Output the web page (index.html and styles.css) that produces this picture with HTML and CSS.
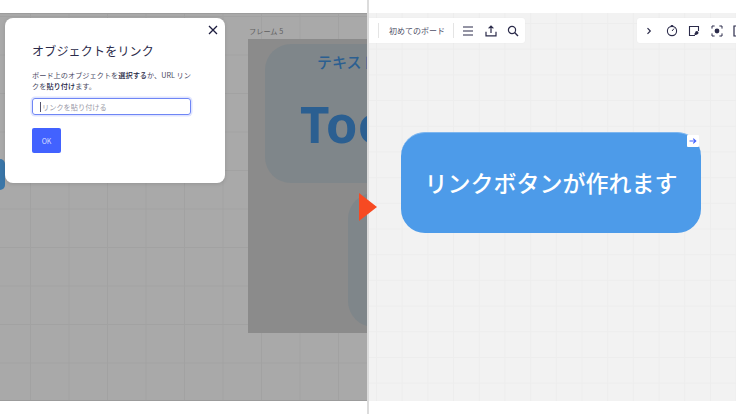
FILE: index.html
```html
<!DOCTYPE html>
<html lang="ja">
<head>
  <meta charset="UTF-8">
  <title>リンクボタン</title>
  <link rel="stylesheet" href="styles.css">
</head>
<body>
  <div class="split">
    <!-- Left: board dimmed behind the dialog -->
    <div class="pane">
      <div class="canvas canvas-dim">
        <div class="frame-label">フレーム 5</div>
        <div class="frame"></div>
        <div class="shape shape-top">
          <div class="shape-title">テキスト</div>
          <div class="shape-big">Too</div>
        </div>
        <div class="shape shape-bottom"></div>
        <div class="sliver"></div>
      </div>
      <div class="dialog">
        <svg class="dialog-close" width="12" height="12" viewBox="0 0 12 12"><path d="M2 2l8 8M10 2l-8 8" stroke="#1d1d3f" stroke-width="1.3" fill="none"/></svg>
        <h1 class="dialog-title">オブジェクトをリンク</h1>
        <p class="dialog-text">ボード上のオブジェクトを<b>選択する</b>か、URL リンクを<b>貼り付け</b>ます。</p>
        <div class="dialog-input"><span class="caret"></span>リンクを貼り付ける</div>
        <div class="dialog-ok">OK</div>
      </div>
    </div>

    <div class="divider"></div>

    <!-- Right: same board after the link is made -->
    <div class="pane">
      <div class="canvas canvas-light">
        <div class="toolbars">
          <div class="toolbar toolbar-left">
            <span class="tool-sep"></span>
            <span class="board-name">初めてのボード</span>
            <span class="tool-sep"></span>
            <svg class="tool" width="12" height="12" viewBox="0 0 12 12"><path d="M1 2h10M1 6h10M1 10h10" stroke="#2b2b4a" stroke-width="1.1" fill="none"/></svg>
            <svg class="tool" width="12" height="12" viewBox="0 0 12 12"><path d="M6 8V1.2M3.6 3.4L6 1l2.4 2.4M1 6.8v4h10v-4" stroke="#2b2b4a" stroke-width="1.2" fill="none"/></svg>
            <svg class="tool" width="12" height="12" viewBox="0 0 12 12"><circle cx="5" cy="5" r="3.6" stroke="#2b2b4a" stroke-width="1.2" fill="none"/><path d="M7.6 7.6L11 11" stroke="#2b2b4a" stroke-width="1.4"/></svg>
          </div>
          <div class="toolbar toolbar-right">
            <svg class="tool" width="12" height="12" viewBox="0 0 12 12"><path d="M4.5 3.2l2.8 2.8-2.8 2.8" stroke="#2b2b4a" stroke-width="1.2" fill="none"/></svg>
            <svg class="tool" width="12" height="12" viewBox="0 0 12 12"><circle cx="6" cy="6" r="4.6" stroke="#2b2b4a" stroke-width="1.1" fill="none"/><path d="M6 6l2-2.4M4.8.6h2.4" stroke="#2b2b4a" stroke-width="1" fill="none"/></svg>
            <svg class="tool" width="12" height="12" viewBox="0 0 12 12"><path d="M10.5 6V1.5h-9v9H7" stroke="#2b2b4a" stroke-width="1.1" fill="none"/><circle cx="8.8" cy="7.8" r="1.7" fill="#2b2b4a"/><rect x="6.6" y="8" width="2" height="2" fill="#2b2b4a"/></svg>
            <svg class="tool" width="12" height="12" viewBox="0 0 12 12"><path d="M1 3.6V1h2.6M8.4 1H11v2.6M11 8.4V11H8.4M3.6 11H1V8.4" stroke="#2b2b4a" stroke-width="1" fill="none"/><circle cx="6" cy="6" r="2.4" fill="#2b2b4a"/></svg>
            <svg class="tool" width="12" height="12" viewBox="0 0 12 12"><path d="M1 1h10v10H1z" stroke="#2b2b4a" stroke-width="1.2" fill="none"/></svg>
          </div>
        </div>
        <div class="link-button">
          リンクボタンが作れます
          <span class="link-badge">
            <svg width="8" height="8" viewBox="0 0 8 8"><path d="M.5 4h6M4.2 1.6L6.8 4 4.2 6.4" stroke="#4262ff" stroke-width="1.1" fill="none"/></svg>
          </span>
        </div>
      </div>
    </div>

    <div class="marker"></div>
  </div>
</body>
</html>
```

FILE: styles.css
```css
* {
  box-sizing: border-box;
}

body {
  margin: 0;
  background: #fff;
  font-family: "Noto Sans CJK JP", "Noto Sans", sans-serif;
  overflow: hidden;
}

.split {
  position: relative;
  display: flex;
  height: 414px;
}

.pane {
  position: relative;
  flex: 1;
  padding: 13px 0;
  overflow: hidden;
}

.divider {
  width: 2px;
  background: #dcdcdc;
}

.canvas {
  position: relative;
  height: 100%;
  overflow: hidden;
}

.canvas-dim {
  background-color: #a9a9a9;
  background-image:
    linear-gradient(#a2a2a2 1px, transparent 1px),
    linear-gradient(90deg, #a2a2a2 1px, transparent 1px);
  background-size: 38.5px 38.5px;
  background-position: 30px 2px;
  border-top: 1px solid #9c9c9c;
  border-bottom: 1px solid #9c9c9c;
}

.canvas-light {
  background-color: #f2f2f2;
  background-image:
    linear-gradient(#ededed 1px, transparent 1px),
    linear-gradient(90deg, #ededed 1px, transparent 1px);
  background-size: 25.7px 25.7px;
  background-position: 7px 10px;
}

/* dimmed board items */
.frame-label {
  position: absolute;
  left: 249px;
  top: 11px;
  font-size: 7.2px;
  line-height: 12px;
  color: #5f5f5f;
}

.frame {
  position: absolute;
  left: 248px;
  top: 25px;
  width: 130px;
  height: 294px;
  background: #8b8b8b;
}

.shape {
  position: absolute;
  background: #7f868a;
  border-radius: 26px;
}

.shape-top {
  left: 265px;
  top: 30px;
  width: 220px;
  height: 139px;
}

.shape-bottom {
  left: 348px;
  top: 179px;
  width: 120px;
  height: 134px;
}

.shape-title {
  padding: 6px 0 0 52px;
  font-size: 15px;
  line-height: 24px;
  font-weight: 500;
  color: #2b5f91;
}

.shape-big {
  padding: 16px 0 0 35px;
  font-family: "Noto Sans", sans-serif;
  font-size: 51px;
  line-height: 66px;
  font-weight: 700;
  color: #2b5f91;
}

.sliver {
  position: absolute;
  left: -10px;
  top: 145px;
  width: 15px;
  height: 31px;
  background: #3a76a8;
  border-radius: 5px;
}

/* dialog */
.dialog {
  position: absolute;
  left: 5px;
  top: 18px;
  width: 220px;
  height: 165px;
  padding: 25px 27px 0;
  background: #fff;
  border-radius: 8px;
  box-shadow: 0 1px 4px rgba(0, 0, 0, 0.12);
}

.dialog-close {
  position: absolute;
  right: 6px;
  top: 6px;
}

.dialog-title {
  margin: 0;
  font-size: 12px;
  line-height: 16px;
  font-weight: 400;
  letter-spacing: 0.2px;
  color: #2b2b4a;
}

.dialog-text {
  margin: 11px 0 0;
  font-size: 7.2px;
  line-height: 11px;
  color: #4a4a63;
}

.dialog-text b {
  font-weight: 500;
  color: #1d1d3f;
}

.dialog-input {
  display: flex;
  align-items: center;
  width: 159px;
  height: 17px;
  margin-top: 6px;
  padding-left: 7px;
  font-size: 7.2px;
  color: #9a9aa8;
  border: 1px solid #6f86f5;
  border-radius: 3px;
  box-shadow: 0 0 0 1.5px #dfe4ff;
}

.caret {
  width: 1px;
  height: 10px;
  margin-right: 1px;
  background: #55556e;
}

.dialog-ok {
  display: flex;
  align-items: center;
  justify-content: center;
  width: 29px;
  height: 25px;
  margin-top: 13px;
  font-size: 7px;
  color: #d5dcff;
  background: #4262ff;
  border-radius: 2px;
}

/* right board */
.toolbars {
  display: flex;
  justify-content: space-between;
  padding-top: 5px;
}

.toolbar {
  display: flex;
  align-items: center;
  height: 25px;
  background: #fff;
  box-shadow: 0 0 2px rgba(0, 0, 0, 0.04);
}

.toolbar-left {
  width: 156px;
  padding-left: 9px;
  border-radius: 0 3px 3px 0;
}

.toolbar-right {
  width: 99px;
  padding-left: 6px;
  border-radius: 3px 0 0 3px;
}

.tool-sep {
  width: 1px;
  height: 15px;
  background: #e4e4e4;
}

.board-name {
  width: 64px;
  margin-left: 10px;
  font-size: 8px;
  line-height: 12px;
  white-space: nowrap;
  color: #4f4f68;
}

.toolbar-left .tool {
  flex: none;
  margin-left: 10.5px;
}

.toolbar-left .tool-sep + .tool {
  margin-left: 8px;
}

.toolbar-right .tool {
  flex: none;
  margin-right: 10.5px;
}

.link-button {
  position: relative;
  display: flex;
  align-items: center;
  justify-content: center;
  width: 300px;
  height: 101px;
  margin: 89px 0 0 32px;
  padding-bottom: 3px;
  font-size: 23px;
  font-weight: 500;
  white-space: nowrap;
  color: #fff;
  background: #4d9be9;
  border-top: 1px solid #7db6ef;
  border-radius: 24px;
}

.link-badge {
  position: absolute;
  right: 2px;
  top: 2px;
  display: flex;
  align-items: center;
  justify-content: center;
  width: 12px;
  height: 12px;
  background: #fff;
  border-radius: 1px;
}

.marker {
  position: absolute;
  left: 359px;
  top: 193px;
  width: 0;
  height: 0;
  border-left: 18px solid #f74a22;
  border-top: 14px solid transparent;
  border-bottom: 14px solid transparent;
}
```
